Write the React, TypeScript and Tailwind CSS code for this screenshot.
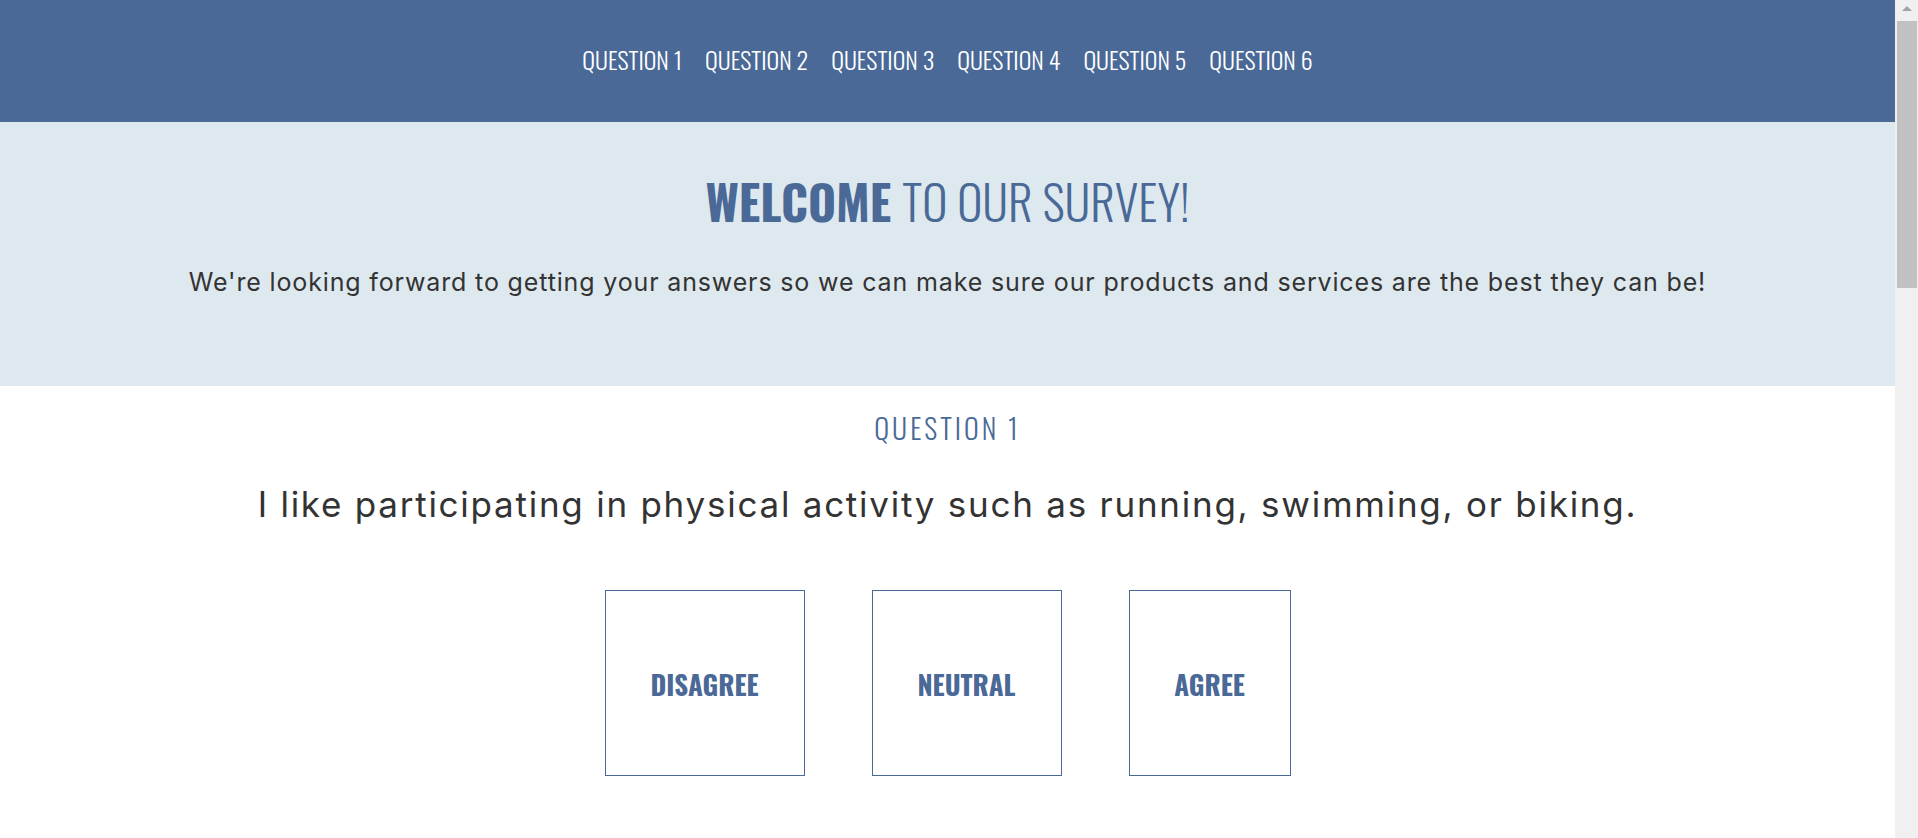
export default function App() {
  const navItems = ["QUESTION 1", "QUESTION 2", "QUESTION 3", "QUESTION 4", "QUESTION 5", "QUESTION 6"];
  return (
    <div className="flex h-[838px] w-full overflow-hidden bg-white">
      <main className="flex min-w-0 flex-1 flex-col">
        <nav className="flex h-[122px] shrink-0 items-center justify-center gap-[23px] bg-[#4a6997] pb-[4px]">
          {navItems.map((n) => (
            <a
              key={n}
              className="font-['Oswald','Liberation_Sans_Narrow','DejaVu_Sans_Condensed',sans-serif] text-[24px] font-light leading-none text-white"
            >
              {n}
            </a>
          ))}
        </nav>
        <section className="flex h-[264px] shrink-0 flex-col items-center bg-[#dee8ef] pt-[55px]">
          <h1 className="font-['Oswald','Liberation_Sans_Narrow','DejaVu_Sans_Condensed',sans-serif] text-[48px] leading-none text-[#4a6997]">
            <span className="font-bold">WELCOME</span> <span className="font-light">TO OUR SURVEY!</span>
          </h1>
          <p className="mt-[45px] font-['Inter',sans-serif] text-[25px] leading-none tracking-[0.85px] text-[#333333]">
            We're looking forward to getting your answers so we can make sure our products and services are the best they can be!
          </p>
        </section>
        <section className="flex flex-1 flex-col items-center pt-[28px]">
          <h2 className="font-['Oswald','Liberation_Sans_Narrow','DejaVu_Sans_Condensed',sans-serif] text-[28px] font-light leading-none tracking-[3px] text-[#4a6997]">
            QUESTION 1
          </h2>
          <p className="mt-[45px] font-['Inter',sans-serif] text-[35px] leading-none tracking-[1.75px] text-[#333333]">
            I like participating in physical activity such as running, swimming, or biking.
          </p>
          <div className="mt-[68px] flex gap-[67px]">
            {[
              ["DISAGREE", "w-[200px]"],
              ["NEUTRAL", "w-[190px]"],
              ["AGREE", "w-[162px]"],
            ].map(([label, w]) => (
              <div
                key={label}
                className={`${w} flex h-[186px] items-center justify-center border border-[#4a6997] pt-[2px]`}
              >
                <span className="font-['Oswald','Liberation_Sans_Narrow','DejaVu_Sans_Condensed',sans-serif] text-[27px] font-bold leading-none text-[#4a6997]">
                  {label}
                </span>
              </div>
            ))}
          </div>
        </section>
      </main>
      <div className="flex h-full w-[23px] shrink-0 flex-col items-center bg-[#f0f0f0]">
        <div className="mt-[6px] h-0 w-0 border-x-[5px] border-b-[5px] border-x-transparent border-b-[#a3a3a3]" />
        <div className="mt-[10px] ml-[1px] h-[267px] w-[20px] bg-[#c1c1c1]" />
      </div>
    </div>
  );
}
